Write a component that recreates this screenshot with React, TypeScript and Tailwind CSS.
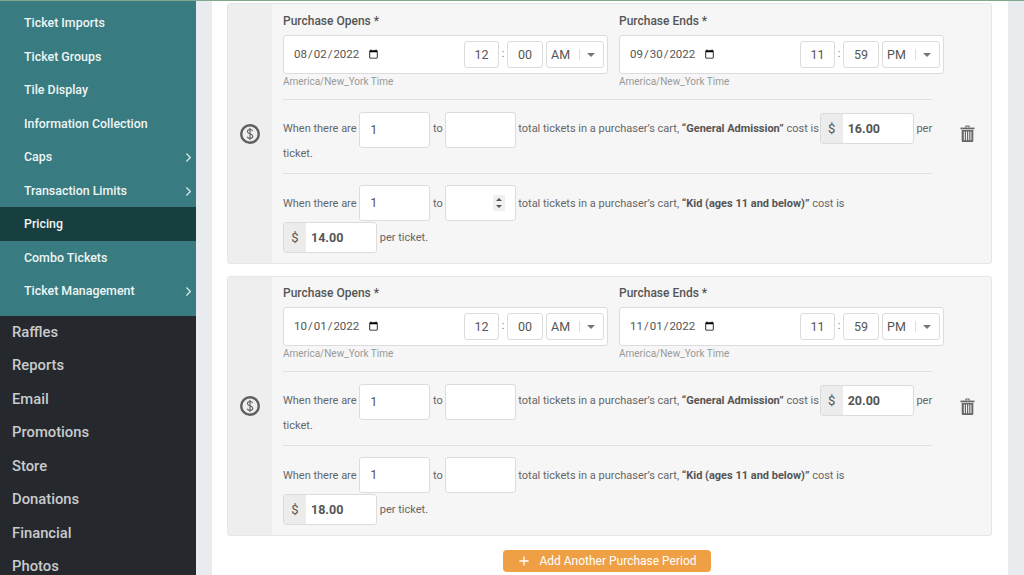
import { ChevronRight, Plus } from "lucide-react";

const teal: [string, boolean?][] = [
  ["Ticket Imports"],
  ["Ticket Groups"],
  ["Tile Display"],
  ["Information Collection"],
  ["Caps", true],
  ["Transaction Limits", true],
  ["Pricing"],
  ["Combo Tickets"],
  ["Ticket Management", true],
];
const dark = ["Raffles", "Reports", "Email", "Promotions", "Store", "Donations", "Financial", "Photos"];

function Sidebar() {
  return (
    <aside className="w-[196px] shrink-0 bg-[#25282d]">
      <div className="bg-[#387b80] pt-[6px] pb-[8.5px]">
        {teal.map(([t, c]) => (
          <div
            key={t}
            className={`flex h-[33.5px] items-center justify-between pt-[2px] pl-[24px] text-[12.4px] font-medium text-[#eef5f5] ${t === "Pricing" ? "bg-[#183f40]" : ""}`}
          >
            <span>{t}</span>
            {c && <ChevronRight size={15} strokeWidth={1.75} className="text-[#dfecec]" />}
          </div>
        ))}
      </div>
      {dark.map((t) => (
        <div key={t} className="flex h-[33.5px] items-center pb-[1.5px] pl-[12px] text-[14.8px] font-medium text-[#c9cbcd]">
          {t}
        </div>
      ))}
    </aside>
  );
}

function DollarIcon() {
  return (
    <svg width="22" height="22" viewBox="0 0 22 22" fill="none" stroke="#5f5f5f">
      <circle cx="11" cy="11" r="8.8" strokeWidth="2.4" />
      <path d="M13.6 8c-.4-1-1.4-1.5-2.6-1.5-1.5 0-2.6.7-2.6 2.1 0 2.9 5.3 1.6 5.3 4.6 0 1.4-1.2 2.2-2.7 2.2-1.3 0-2.4-.6-2.8-1.7M11 5v12" strokeWidth="1.1" />
    </svg>
  );
}

function TrashIcon() {
  return (
    <svg width="15" height="17" viewBox="0 0 15 17" fill="#666">
      <rect x="0.5" y="2.6" width="14" height="1.7" />
      <path d="M5 2.6 5.7.6h3.6l.7 2h-1.3L8.4 1.6H6.6l-.3 1z" />
      <path fillRule="evenodd" d="M1.7 5h11.6v10.4c0 .9-.6 1.6-1.4 1.6H3.1c-.8 0-1.4-.7-1.4-1.6zM3.8 6.4v8.8h1V6.4zm2.2 0v8.8h1V6.4zm2.2 0v8.8h1V6.4zm2.2 0v8.8h1V6.4z" />
    </svg>
  );
}

function DateGroup({ label, date, h, m, ap }: { label: string; date: string; h: string; m: string; ap: string }) {
  const box = "h-[27px] rounded-[3px] border border-[#dcdcdc] bg-white text-[12.5px] text-[#555] outline-none";
  return (
    <div className="w-[325px]">
      <div className="h-[31px] pt-[9px] text-[12px] leading-[16px] font-medium text-[#555]">{label}</div>
      <div className="flex h-[39px] items-center rounded-[3px] border border-[#dcdcdc] bg-white pl-[9px] pr-[3px]">
        <input
          type="date"
          defaultValue={date}
          className="w-[88px] border-0 bg-transparent p-0 text-[11.5px] text-[#555] outline-none"
        />
        <input readOnly defaultValue={h} className={`ml-auto w-[35px] text-center ${box}`} />
        <span className="w-[8px] text-center text-[11px] text-[#777]">:</span>
        <input readOnly defaultValue={m} className={`w-[36px] text-center ${box}`} />
        <div className={`ml-[3px] flex w-[58px] items-center pl-[4px] ${box}`}>
          <span className="w-[28px] pt-[2px]">{ap}</span>
          <span className="h-[11px] w-px bg-[#ddd]" />
          <span className="ml-[7px] h-0 w-0 border-x-[4px] border-t-[4px] border-x-transparent border-t-[#777]" />
        </div>
      </div>
      <div className="mt-[1px] text-[10px] leading-[14px] text-[#999]">America/New_York Time</div>
    </div>
  );
}

function Qty({ value, spin, tight, pull }: { value?: string; spin?: boolean; tight?: boolean; pull?: boolean }) {
  return (
    <span
      className={`relative inline-block align-middle ${tight ? "top-[1px] -my-[5.5px]" : "-top-px"} ${pull ? "-ml-px" : ""}`}
    >
      <input
        readOnly
        defaultValue={value}
        className="block h-[36px] w-[71px] rounded-[3px] border border-[#dcdcdc] bg-white pl-[10px] text-[12.5px] text-[#555] outline-none"
      />
      {spin && (
        <span className="absolute top-[10px] right-[11px] flex h-[16px] w-[12px] flex-col items-center justify-center gap-[4px] bg-[#f0f0f0]">
          <span className="h-0 w-0 border-x-[3px] border-b-[3px] border-x-transparent border-b-[#555]" />
          <span className="h-0 w-0 border-x-[3px] border-t-[3px] border-x-transparent border-t-[#555]" />
        </span>
      )}
    </span>
  );
}

function Price({ value, tight }: { value: string; tight?: boolean }) {
  return (
    <span
      className={`inline-flex h-[31px] w-[94px] overflow-hidden rounded-[3px] border border-[#dcdcdc] bg-white align-middle leading-[29px] ${tight ? "-my-[3px] -ml-[2px]" : "relative"}`}
    >
      <span className="w-[22px] shrink-0 bg-[#ececec] text-center text-[13px] text-[#555]">$</span>
      <span className="pl-[5px] text-[12.5px] font-bold text-[#555]">{value}</span>
    </span>
  );
}

function Rule({ name, price, spin, tight }: { name: string; price: string; spin?: boolean; tight?: boolean }) {
  return (
    <p className={`w-[652px] text-[11px] text-[#666] ${tight ? "leading-[25px]" : "leading-[31px]"}`}>
      When there are <Qty value="1" tight={tight} /> to <Qty spin={spin} tight={tight} pull /> total tickets in a purchaser’s cart,{" "}
      <b className="font-bold text-[#555]">“{name}”</b> cost is <Price value={price} tight={tight} /> per ticket.
    </p>
  );
}

function Card({ opens, ends, gen, kid, spin, lift }: { opens: string; ends: string; gen: string; kid: string; spin?: boolean; lift?: boolean }) {
  return (
    <section className={`flex rounded-[3px] border border-[#e6e6e6] bg-[#f6f6f6] ${lift ? "h-[260px]" : "h-[261px]"}`}>
      <div className="flex w-[44px] shrink-0 items-center justify-center bg-[#eeeeee]">
        <DollarIcon />
      </div>
      <div className={`w-[672px] shrink-0 pl-[11px] ${lift ? "-mt-px" : ""}`}>
        <div className="flex gap-[11px]">
          <DateGroup label="Purchase Opens *" date={opens} h="12" m="00" ap="AM" />
          <DateGroup label="Purchase Ends *" date={ends} h="11" m="59" ap="PM" />
        </div>
        <hr className="mt-[10px] mb-[15.5px] w-[649px] border-0 border-t border-[#dbe1e6]" />
        <Rule name="General Admission" price={gen} tight />
        <hr className="mt-[6.5px] mb-[12px] w-[649px] border-0 border-t border-[#dbe1e6]" />
        <Rule name="Kid (ages 11 and below)" price={kid} spin={spin} />
      </div>
      <div className="flex flex-1 items-center justify-center">
        <TrashIcon />
      </div>
    </section>
  );
}

export default function App() {
  return (
    <div className="relative flex h-[575px] w-[1024px] overflow-hidden bg-[#e9ecef] font-['Roboto',sans-serif]">
      <div className="absolute inset-x-0 top-0 z-10 h-px bg-[#7fa88d]" />
      <Sidebar />
      <main className="mr-[16px] ml-[16px] flex-1 bg-white pt-[3px] pr-[16px] pl-[15px]">
        <div className="flex flex-col gap-[12px]">
          <Card opens="2022-08-02" ends="2022-09-30" gen="16.00" kid="14.00" spin />
          <Card opens="2022-10-01" ends="2022-11-01" gen="20.00" kid="18.00" lift />
        </div>
        <div className="mt-[14px] flex justify-center pr-[5px]">
          <button className="flex h-[22px] w-[208px] items-center justify-center gap-[8px] rounded-[4px] bg-[#f0a044] text-[12px] font-normal text-white">
            <Plus size={14} strokeWidth={2.25} />
            Add Another Purchase Period
          </button>
        </div>
      </main>
    </div>
  );
}
